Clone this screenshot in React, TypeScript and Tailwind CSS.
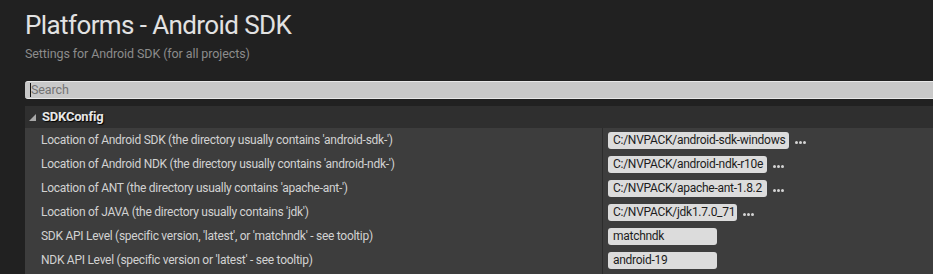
import React from "react";

const rows = [
  { label: "Location of Android SDK (the directory usually contains 'android-sdk-')", value: "C:/NVPACK/android-sdk-windows", w: 181, dots: true },
  { label: "Location of Android NDK (the directory usually contains 'android-ndk-')", value: "C:/NVPACK/android-ndk-r10e", w: 159, dots: true },
  { label: "Location of ANT (the directory usually contains 'apache-ant-')", value: "C:/NVPACK/apache-ant-1.8.2", w: 159, dots: true },
  { label: "Location of JAVA (the directory usually contains 'jdk')", value: "C:/NVPACK/jdk1.7.0_71", w: 129, dots: true },
  { label: "SDK API Level (specific version, 'latest', or 'matchndk' - see tooltip)", value: "matchndk", w: 109, dots: false },
  { label: "NDK API Level (specific version or 'latest' - see tooltip)", value: "android-19", w: 109, dots: false },
];

function Dots() {
  return (
    <div className="ml-[6px] mt-[4px] flex gap-[1px]">
      <div className="h-[3px] w-[3px] rounded-full bg-[#d4d4d4]" />
      <div className="h-[3px] w-[3px] rounded-full bg-[#d4d4d4]" />
      <div className="h-[3px] w-[3px] rounded-full bg-[#d4d4d4]" />
    </div>
  );
}

export default function App() {
  return (
    <div
      className="h-[274px] w-[933px] overflow-hidden bg-[#212121]"
      style={{ fontFamily: "Roboto, 'Liberation Sans', sans-serif" }}
    >
      <div className="pl-[25px] pt-[10px]">
        <div className="text-[26px] leading-[30px] tracking-[-0.6px] text-[#e2e2e2]">Platforms - Android SDK</div>
        <div className="mt-[6px] text-[12.5px] leading-[16px] tracking-[-0.1px] text-[#8c8c8c]">
          Settings for Android SDK (for all projects)
        </div>
      </div>
      <div className="ml-[25px] mt-[19px] flex h-[18px] items-center rounded-l-[3px] border-t border-b border-[#e8e8e8] bg-[#c9c9c9]">
        <div className="ml-[5px] h-[14px] w-[1px] bg-[#111]" />
        <span className="text-[12.5px] leading-[16px] tracking-[-0.1px] text-[#747474]">Search</span>
      </div>
      <div className="ml-[25px] mt-[7px]">
        <div className="flex h-[22px] items-center bg-[#2f2f2f] pl-[4px]">
          <svg width="7" height="7" viewBox="0 0 7 7" className="mr-[6px] mt-[1px]">
            <polygon points="7,0 7,7 0,7" fill="#a8a8a8" />
          </svg>
          <span
            className="text-[13px] font-bold leading-[16px] tracking-[-0.2px] text-[#e8e8e8]"
            style={{ textShadow: "1px 1px 1px #000" }}
          >
            SDKConfig
          </span>
        </div>
        <div className="bg-[#3d3d3d]">
          {rows.map((r) => (
            <div key={r.label} className="flex h-[24px]">
              <div className="flex w-[577px] items-center whitespace-nowrap pl-[16px] text-[12px] tracking-[-0.27px] text-[#d2d2d2]">
                {r.label}
              </div>
              <div className="w-[1px] bg-[#2c2c2c]" />
              <div className="flex items-center pl-[5px]">
                <div
                  className="flex h-[17px] items-center whitespace-nowrap rounded-[3px] bg-[#dcdcdc] pl-[5px] text-[12px] tracking-[-0.27px] text-[#1c1c1c]"
                  style={{ width: r.w }}
                >
                  {r.value}
                </div>
                {r.dots && <Dots />}
              </div>
            </div>
          ))}
          <div className="flex h-[24px]">
            <div className="w-[577px]" />
            <div className="w-[1px] bg-[#2c2c2c]" />
          </div>
        </div>
      </div>
    </div>
  );
}
